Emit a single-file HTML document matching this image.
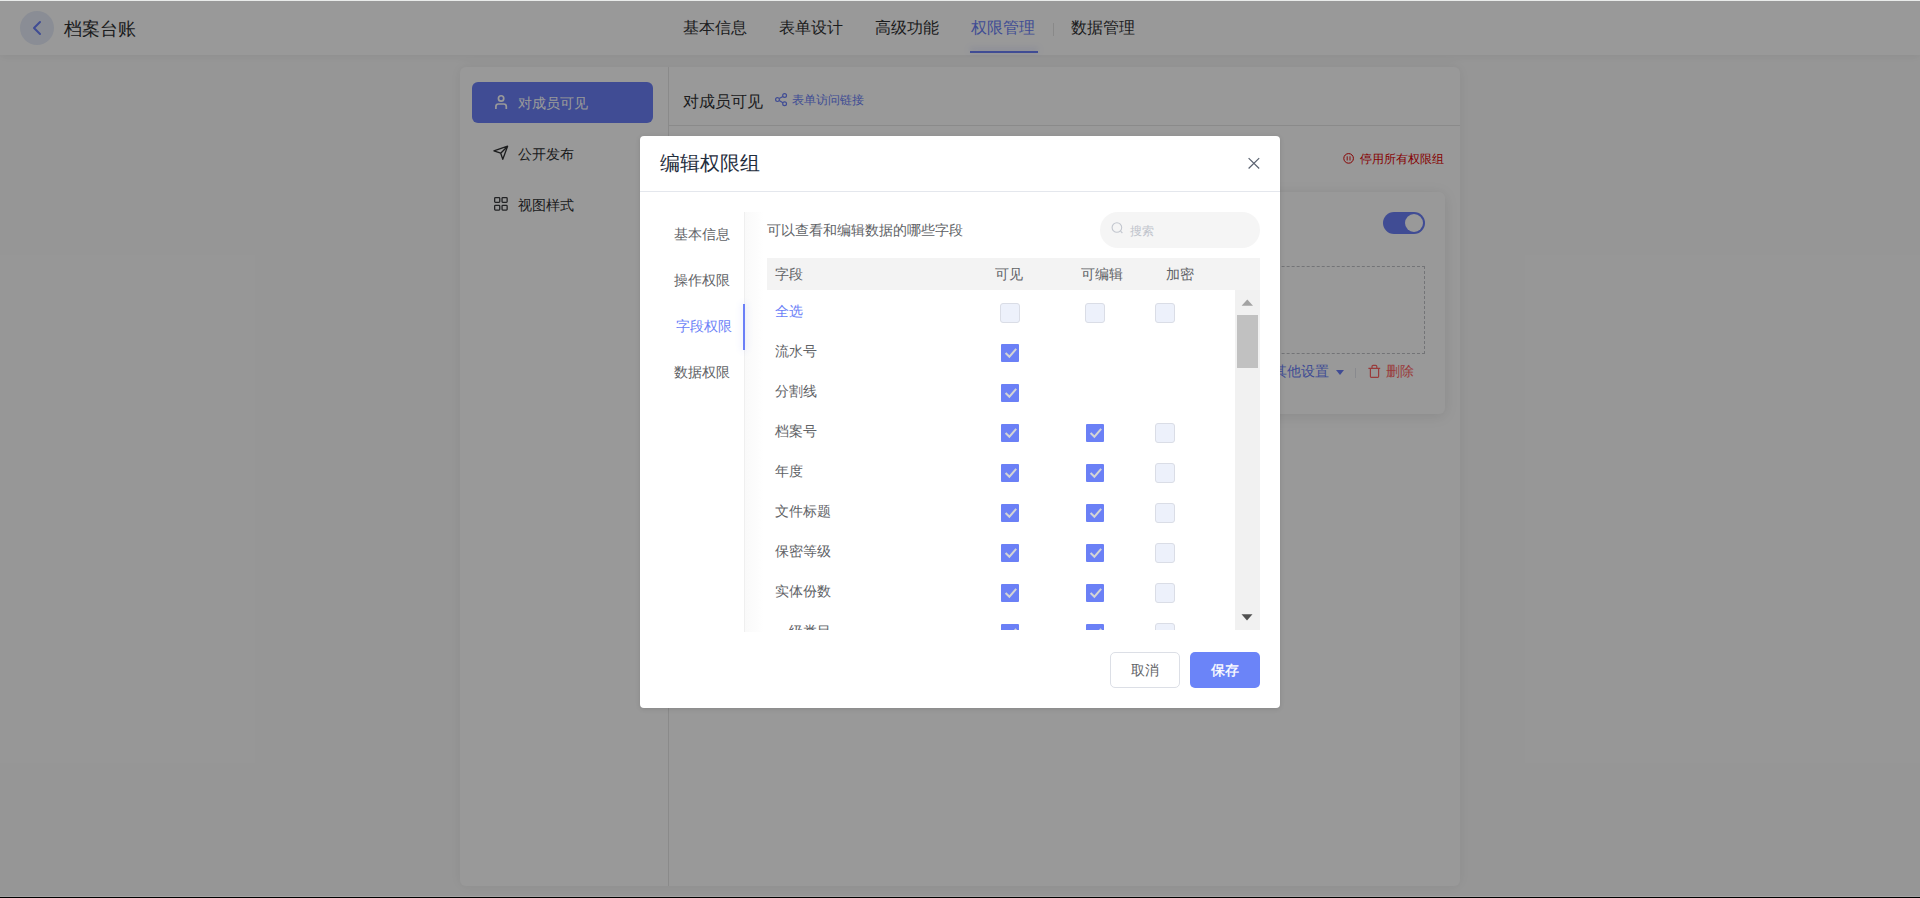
<!DOCTYPE html>
<html><head><meta charset="utf-8">
<style>
*{box-sizing:border-box;margin:0;padding:0}
html,body{width:1920px;height:898px;overflow:hidden}
body{font-family:"Liberation Sans",sans-serif;background:#fbfbfb;position:relative;color:#303133}
.abs{position:absolute}
.t{position:absolute;white-space:nowrap;line-height:1}
#topline{position:absolute;left:0;top:0;width:1920px;height:1px;background:#e9ebea;z-index:100}
#botline{position:absolute;left:0;top:897px;width:1920px;height:1px;background:#000;z-index:100}
#header{position:absolute;left:0;top:0;width:1920px;height:55px;background:#fff;box-shadow:0 2px 8px rgba(0,0,0,.06)}
#card{position:absolute;left:460px;top:67px;width:1000px;height:819px;background:#fff;border-radius:6px;box-shadow:0 0 14px rgba(0,0,0,.07)}
#overlay{position:absolute;left:0;top:0;width:1920px;height:898px;background:rgba(0,0,0,.4)}
#modal{position:absolute;left:640px;top:136px;width:640px;height:572px;background:#fff;border-radius:4px;box-shadow:0 1px 5px rgba(0,0,0,.12)}
.cbk{position:absolute;width:18px;height:18px;background:#6b80f6;border-radius:1px}
.cbk svg{position:absolute;left:0;top:0}
.cbu{position:absolute;width:20px;height:20px;border:1px solid #dadde6;background:#edf1fb;border-radius:3px}
</style></head>
<body>
<div id="header">
  <div class="abs" style="left:20px;top:11px;width:34px;height:34px;border-radius:50%;background:#e6ecf8"></div>
  <svg class="abs" style="left:30px;top:19px" width="14" height="18" viewBox="0 0 14 18"><path d="M10 3 L4 9 L10 15" fill="none" stroke="#6b7ff7" stroke-width="2" stroke-linecap="round" stroke-linejoin="round"/></svg>
  <div class="t" style="left:64px;top:19.5px;font-size:18px;color:#303133">档案台账</div>
  <div class="t" style="left:683px;top:19.5px;font-size:16px;color:#303133">基本信息</div>
  <div class="t" style="left:779px;top:19.5px;font-size:16px;color:#303133">表单设计</div>
  <div class="t" style="left:875px;top:19.5px;font-size:16px;color:#303133">高级功能</div>
  <div class="t" style="left:971px;top:19.5px;font-size:16px;color:#6b7ff7">权限管理</div>
  <div class="abs" style="left:970px;top:51px;width:68px;height:2px;background:#6b7ff7;box-shadow:0 -2px 6px rgba(107,127,247,.35)"></div>
  <div class="abs" style="left:1053px;top:23px;width:1px;height:13px;background:#e4e4e4"></div>
  <div class="t" style="left:1071px;top:19.5px;font-size:16px;color:#303133">数据管理</div>
</div>

<div id="card">
  <div class="abs" style="left:208px;top:0;width:1px;height:819px;background:#e6e6e6"></div>
  <!-- sidebar -->
  <div class="abs" style="left:12px;top:15px;width:181px;height:41px;border-radius:6px;background:#6b7ff7"></div>
  <svg class="abs" style="left:30px;top:23px" width="20" height="22" viewBox="490 90 20 22"><circle cx="501.1" cy="98.4" r="2.65" fill="none" stroke="#fff" stroke-width="1.7"/><path d="M495.9 109 V106.5 Q495.9 104 498.4 104 H503.8 Q506.3 104 506.3 106.5 V109" fill="none" stroke="#fff" stroke-width="1.7"/></svg>
  <div class="t" style="left:58px;top:29px;font-size:14px;color:#fff">对成员可见</div>
  <svg class="abs" style="left:30px;top:75px" width="20" height="20" viewBox="490 142 20 20"><path d="M493.9 150.8 L507.6 146.2 L502.8 159.3 L500.7 153.2 Z M500.7 153.2 L507.6 146.2" fill="none" stroke="#303133" stroke-width="1.3" stroke-linejoin="round"/></svg>
  <div class="t" style="left:58px;top:80px;font-size:14px;color:#303133">公开发布</div>
  <svg class="abs" style="left:30px;top:125px" width="20" height="20" viewBox="490 192 20 20"><g fill="none" stroke="#3a3b3e" stroke-width="1.3"><rect x="494.65" y="197.6" width="5.1" height="4.8" rx="0.8"/><rect x="502.05" y="197.6" width="5.1" height="4.8" rx="0.8"/><rect x="494.65" y="205.4" width="5.1" height="4.7" rx="0.8"/><rect x="502.05" y="205.4" width="5.1" height="4.7" rx="0.8"/></g></svg>
  <div class="t" style="left:58px;top:131px;font-size:14px;color:#303133">视图样式</div>
  <!-- content header -->
  <div class="t" style="left:223px;top:26.5px;font-size:16px;color:#303133">对成员可见</div>
  <svg class="abs" style="left:310px;top:21px" width="20" height="20" viewBox="770 88 20 20"><g fill="none" stroke="#6b7ff7" stroke-width="1.2"><circle cx="784.6" cy="95.5" r="1.9"/><circle cx="777.5" cy="99.6" r="1.9"/><circle cx="784.6" cy="103.8" r="1.9"/><path d="M779.2 98.6 L782.9 96.5 M779.2 100.6 L782.9 102.8"/></g></svg>
  <div class="t" style="left:332px;top:27px;font-size:12px;color:#6b7ff7">表单访问链接</div>
  <div class="abs" style="left:208px;top:58px;width:792px;height:1px;background:#e6e6e6"></div>
  <!-- red link -->
  <svg class="abs" style="left:880px;top:83px" width="20" height="20" viewBox="1340 150 20 20"><circle cx="1348.6" cy="158.4" r="4.8" fill="none" stroke="#e00000" stroke-width="1"/><path d="M1347.2 156.3 V160.5 M1350.0 156.3 V160.5" stroke="#e00000" stroke-width="0.9"/></svg>
  <div class="t" style="left:900px;top:86px;font-size:12px;color:#e00000">停用所有权限组</div>
  <!-- inner card -->
  <div class="abs" style="left:223px;top:125px;width:762px;height:222px;border-radius:6px;background:#fff;box-shadow:0 2px 14px rgba(0,0,0,.1)"></div>
  <div class="abs" style="left:923px;top:145px;width:42px;height:22px;border-radius:11px;background:#6b7ff7"></div>
  <div class="abs" style="left:945px;top:147px;width:18px;height:18px;border-radius:50%;background:#fff"></div>
  <div class="abs" style="left:240px;top:199px;width:725px;height:88px;border:1px dashed #c0c2c6"></div>
  <div class="t" style="left:813px;top:297px;font-size:14px;color:#6b7ff7">其他设置</div>
  <svg class="abs" style="left:876px;top:303px" width="8" height="5" viewBox="0 0 8 5"><path d="M0 0 H8 L4 5 Z" fill="#6b7ff7"/></svg>
  <div class="abs" style="left:895px;top:301px;width:1px;height:10px;background:#e4e7ed"></div>
  <svg class="abs" style="left:904px;top:293px" width="20" height="24" viewBox="1364 360 20 24"><path d="M1368.4 368.4 H1380.2 M1372 368.4 V366.5 Q1372 365.4 1373.1 365.4 H1375.7 Q1376.8 365.4 1376.8 366.5 V368.4 M1370.4 368.4 V376.6 Q1370.4 377.4 1371.2 377.4 H1377.8 Q1378.6 377.4 1378.6 376.6 V368.4" fill="none" stroke="#ff6464" stroke-width="1.2"/></svg>
  <div class="t" style="left:926px;top:297px;font-size:14px;color:#ff6464">删除</div>
</div>

<div id="overlay"></div>

<div id="modal">
  <div class="t" style="left:20px;top:17px;font-size:20px;color:#1f2d3d">编辑权限组</div>
  <svg class="abs" style="left:604px;top:18px" width="20" height="20" viewBox="1244 154 20 20"><path d="M1248.6 158.1 L1259.2 168.5 M1259.2 158.1 L1248.6 168.5" stroke="#5a6270" stroke-width="1.2"/></svg>
  <div class="abs" style="left:0;top:55px;width:640px;height:1px;background:#e4e7ed"></div>
  <!-- nav -->
  <div class="t" style="left:34px;top:91px;font-size:14px;color:#606266">基本信息</div>
  <div class="t" style="left:34px;top:137px;font-size:14px;color:#606266">操作权限</div>
  <div class="t" style="left:36px;top:183px;font-size:14px;color:#6b7ff7">字段权限</div>
  <div class="t" style="left:34px;top:229px;font-size:14px;color:#606266">数据权限</div>
  <div class="abs" style="left:104px;top:76px;width:20px;height:420px;background:linear-gradient(to right,#f9f9f9,#fff)"></div>
  <div class="abs" style="left:104px;top:76px;width:1px;height:420px;background:#efefef"></div>
  <div class="abs" style="left:103px;top:168px;width:2px;height:46px;background:#6b7ff7;box-shadow:0 0 7px 1px rgba(107,127,247,.14)"></div>
  <!-- content -->
  <div class="t" style="left:127px;top:87px;font-size:14px;color:#606266">可以查看和编辑数据的哪些字段</div>
  <div class="abs" style="left:460px;top:76px;width:160px;height:36px;border-radius:18px;background:#f5f5f5"></div>
  <svg class="abs" style="left:464px;top:80px" width="24" height="24" viewBox="1104 216 24 24"><circle cx="1116.9" cy="227.5" r="4.8" fill="none" stroke="#c3c7cf" stroke-width="1.1"/><path d="M1120.5 231.1 L1122.4 233" stroke="#c3c7cf" stroke-width="1.1"/></svg>
  <div class="t" style="left:490px;top:88.5px;font-size:12px;color:#c0c4cc">搜索</div>
  <div class="abs" style="left:127px;top:122px;width:493px;height:32px;background:#f3f3f3"></div>
  <div class="t" style="left:135px;top:131px;font-size:14px;color:#606266">字段</div>
  <div class="t" style="left:355px;top:131px;font-size:14px;color:#606266">可见</div>
  <div class="t" style="left:441px;top:131px;font-size:14px;color:#606266">可编辑</div>
  <div class="t" style="left:526px;top:131px;font-size:14px;color:#606266">加密</div>
  <div class="abs" style="left:127px;top:155px;width:468px;height:339px;overflow:hidden">
<div class="t" style="left:8px;top:13px;font-size:14px;color:#6b7ff7">全选</div>
<div class="cbu" style="left:233px;top:12px"></div>
<div class="cbu" style="left:318px;top:12px"></div>
<div class="cbu" style="left:388px;top:12px"></div>
<div class="t" style="left:8px;top:53px;font-size:14px;color:#606266">流水号</div>
<div class="cbk" style="left:234px;top:53px"><svg width="18" height="18" viewBox="0 0 18 18"><path d="M4.6 9 L8.4 12.7 L15.2 4.9" fill="none" stroke="#d4d4d4" stroke-width="2"/></svg></div>
<div class="t" style="left:8px;top:93px;font-size:14px;color:#606266">分割线</div>
<div class="cbk" style="left:234px;top:93px"><svg width="18" height="18" viewBox="0 0 18 18"><path d="M4.6 9 L8.4 12.7 L15.2 4.9" fill="none" stroke="#d4d4d4" stroke-width="2"/></svg></div>
<div class="t" style="left:8px;top:133px;font-size:14px;color:#606266">档案号</div>
<div class="cbk" style="left:234px;top:133px"><svg width="18" height="18" viewBox="0 0 18 18"><path d="M4.6 9 L8.4 12.7 L15.2 4.9" fill="none" stroke="#d4d4d4" stroke-width="2"/></svg></div>
<div class="cbk" style="left:319px;top:133px"><svg width="18" height="18" viewBox="0 0 18 18"><path d="M4.6 9 L8.4 12.7 L15.2 4.9" fill="none" stroke="#d4d4d4" stroke-width="2"/></svg></div>
<div class="cbu" style="left:388px;top:132px"></div>
<div class="t" style="left:8px;top:173px;font-size:14px;color:#606266">年度</div>
<div class="cbk" style="left:234px;top:173px"><svg width="18" height="18" viewBox="0 0 18 18"><path d="M4.6 9 L8.4 12.7 L15.2 4.9" fill="none" stroke="#d4d4d4" stroke-width="2"/></svg></div>
<div class="cbk" style="left:319px;top:173px"><svg width="18" height="18" viewBox="0 0 18 18"><path d="M4.6 9 L8.4 12.7 L15.2 4.9" fill="none" stroke="#d4d4d4" stroke-width="2"/></svg></div>
<div class="cbu" style="left:388px;top:172px"></div>
<div class="t" style="left:8px;top:213px;font-size:14px;color:#606266">文件标题</div>
<div class="cbk" style="left:234px;top:213px"><svg width="18" height="18" viewBox="0 0 18 18"><path d="M4.6 9 L8.4 12.7 L15.2 4.9" fill="none" stroke="#d4d4d4" stroke-width="2"/></svg></div>
<div class="cbk" style="left:319px;top:213px"><svg width="18" height="18" viewBox="0 0 18 18"><path d="M4.6 9 L8.4 12.7 L15.2 4.9" fill="none" stroke="#d4d4d4" stroke-width="2"/></svg></div>
<div class="cbu" style="left:388px;top:212px"></div>
<div class="t" style="left:8px;top:253px;font-size:14px;color:#606266">保密等级</div>
<div class="cbk" style="left:234px;top:253px"><svg width="18" height="18" viewBox="0 0 18 18"><path d="M4.6 9 L8.4 12.7 L15.2 4.9" fill="none" stroke="#d4d4d4" stroke-width="2"/></svg></div>
<div class="cbk" style="left:319px;top:253px"><svg width="18" height="18" viewBox="0 0 18 18"><path d="M4.6 9 L8.4 12.7 L15.2 4.9" fill="none" stroke="#d4d4d4" stroke-width="2"/></svg></div>
<div class="cbu" style="left:388px;top:252px"></div>
<div class="t" style="left:8px;top:293px;font-size:14px;color:#606266">实体份数</div>
<div class="cbk" style="left:234px;top:293px"><svg width="18" height="18" viewBox="0 0 18 18"><path d="M4.6 9 L8.4 12.7 L15.2 4.9" fill="none" stroke="#d4d4d4" stroke-width="2"/></svg></div>
<div class="cbk" style="left:319px;top:293px"><svg width="18" height="18" viewBox="0 0 18 18"><path d="M4.6 9 L8.4 12.7 L15.2 4.9" fill="none" stroke="#d4d4d4" stroke-width="2"/></svg></div>
<div class="cbu" style="left:388px;top:292px"></div>
<div class="t" style="left:8px;top:333px;font-size:14px;color:#606266">一级类目</div>
<div class="cbk" style="left:234px;top:333px"><svg width="18" height="18" viewBox="0 0 18 18"><path d="M4.6 9 L8.4 12.7 L15.2 4.9" fill="none" stroke="#d4d4d4" stroke-width="2"/></svg></div>
<div class="cbk" style="left:319px;top:333px"><svg width="18" height="18" viewBox="0 0 18 18"><path d="M4.6 9 L8.4 12.7 L15.2 4.9" fill="none" stroke="#d4d4d4" stroke-width="2"/></svg></div>
<div class="cbu" style="left:388px;top:332px"></div>
  </div>
  <div class="abs" style="left:595px;top:154px;width:25px;height:340px;background:#f1f1f1"></div>
  <svg class="abs" style="left:601px;top:163px" width="13" height="7" viewBox="0 0 13 7"><path d="M0.6 6.8 H12 L6.3 0.5 Z" fill="#a3a3a3"/></svg>
  <div class="abs" style="left:597px;top:179px;width:21px;height:53px;background:#c1c1c1"></div>
  <svg class="abs" style="left:601px;top:478px" width="12" height="7" viewBox="0 0 12 7"><path d="M0.5 0.2 H11.5 L6 6.5 Z" fill="#505050"/></svg>
  <!-- footer -->
  <div class="abs" style="left:470px;top:516px;width:70px;height:36px;border:1px solid #dcdfe6;border-radius:5px;background:#fff"></div>
  <div class="t" style="left:491px;top:527px;font-size:14px;color:#606266">取消</div>
  <div class="abs" style="left:550px;top:516px;width:70px;height:36px;border-radius:5px;background:#6b84f8"></div>
  <div class="t" style="left:571px;top:527px;font-size:14px;color:#fff;-webkit-text-stroke:0.35px #fff">保存</div>
</div>

<div id="topline"></div>
<div style="position:absolute;left:0;top:896px;width:1920px;height:1px;background:#a3a3a3;z-index:100"></div>
<div id="botline"></div>
</body></html>
